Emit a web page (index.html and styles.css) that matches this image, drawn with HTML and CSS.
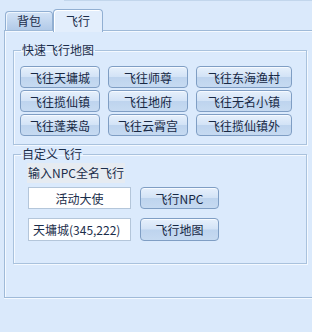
FILE: index.html
```html
<!DOCTYPE html>
<html>

<head>
    <meta charset="UTF-8">
    <meta name="viewport" content="width=device-width, initial-scale=1.0">
    <title>飞行</title>
    <link rel="stylesheet" href="styles.css">
</head>

<body>
    <div class="topline"></div>
    <div class="tabs">
        <div class="tab">背包</div>
        <div class="tab active">飞行</div>
    </div>
    <div class="panel">
        <fieldset class="group">
            <legend>快速飞行地图</legend>
            <div class="grid">
                <button class="btn">飞往天墉城</button>
                <button class="btn">飞往师尊</button>
                <button class="btn">飞往东海渔村</button>
                <button class="btn">飞往揽仙镇</button>
                <button class="btn">飞往地府</button>
                <button class="btn">飞往无名小镇</button>
                <button class="btn">飞往蓬莱岛</button>
                <button class="btn">飞往云霄宫</button>
                <button class="btn">飞往揽仙镇外</button>
            </div>
        </fieldset>
        <fieldset class="group group2">
            <legend>自定义飞行</legend>
            <div class="custom">
                <div class="label">输入NPC全名飞行</div>
                <div class="row">
                    <input class="field center" type="text" value="活动大使">
                    <button class="btn small">飞行NPC</button>
                </div>
                <div class="row row2">
                    <input class="field" type="text" value="天墉城(345,222)">
                    <button class="btn small">飞行地图</button>
                </div>
            </div>
        </fieldset>
    </div>
</body>

</html>
```

FILE: styles.css
```css
html, body {
    margin: 0;
    padding: 0;
}

body {
    width: 312px;
    height: 332px;
    overflow: hidden;
    background-color: #dae9fb;
    font-family: "Noto Sans CJK SC", sans-serif;
    font-size: 12px;
    color: #1b2d4a;
}

.topline {
    margin-left: 64px;
    height: 0;
    border-top: 1px solid #c2d6ec;
}

.tabs {
    display: flex;
    align-items: flex-end;
    height: 29px;
    padding-left: 5px;
}

.tab {
    width: 46px;
    height: 18px;
    line-height: 18px;
    text-align: center;
    border: 1px solid #91afd2;
    border-bottom: none;
    border-radius: 4px 4px 0 0;
    background: linear-gradient(#d3e3f6, #b2cae8);
    box-shadow: inset 1px 1px 0 #eef5fd;
}

.tab.active {
    width: 48px;
    height: 22px;
    line-height: 22px;
    margin-bottom: -2px;
    position: relative;
    z-index: 1;
    background: #e3eefc;
    box-shadow: inset 1px 1px 0 #ffffff;
}

.panel {
    margin-left: 4px;
    width: 299px;
    height: 254px;
    padding: 12px 0 0 8px;
    border: 1px solid #9fbad8;
    border-right: none;
    box-shadow: inset 1px 1px 0 #f4f9ff, 0 1px 0 #f4f9ff;
    background-color: #dbeafc;
}

.group {
    margin: 0;
    padding: 0;
    width: 292px;
    border: 1px solid #a9c2dd;
    box-shadow: 1px 1px 0 #f4f9ff, inset 1px 1px 0 #f4f9ff;
}

.group legend {
    margin-left: 7px;
    padding: 0 1px;
    line-height: 14px;
    height: 14px;
}

.grid {
    display: grid;
    grid-template-columns: 80px 80px 96px;
    grid-auto-rows: 22px;
    column-gap: 8px;
    row-gap: 2px;
    margin: 9px 0 8px 6px;
}

.btn {
    margin: 0;
    padding: 0;
    font-family: "Noto Sans CJK SC", sans-serif;
    font-size: 12px;
    color: #172844;
    border: 1px solid #7f9ec4;
    border-radius: 4px;
    background: linear-gradient(#e6f0fc 0%, #d3e3f6 48%, #bed4ee 52%, #c6daf1 100%);
    box-shadow: inset 0 1px 0 #f6faff;
}

.group2 {
    margin-top: 2px;
}

.custom {
    padding: 2px 0 22px 14px;
}

.label {
    width: 98px;
    height: 20px;
    line-height: 20px;
    margin-left: -1px;
    padding-left: 1px;
    box-sizing: border-box;
    background-color: #e6ebf1;
}

.row {
    display: flex;
    margin-top: 4px;
    height: 22px;
}

.row2 {
    margin-top: 9px;
    height: 23px;
}

.field {
    width: 103px;
    height: 100%;
    margin: 0;
    padding: 0 0 0 4px;
    box-sizing: border-box;
    border: 1px solid #b4c6da;
    background: #ffffff;
    font-family: "Noto Sans CJK SC", sans-serif;
    font-size: 12px;
    color: #1b2d4a;
    outline: none;
}

.field.center {
    text-align: center;
    padding: 0;
}

.small {
    width: 79px;
    height: 100%;
    margin-left: 9px;
}
```
